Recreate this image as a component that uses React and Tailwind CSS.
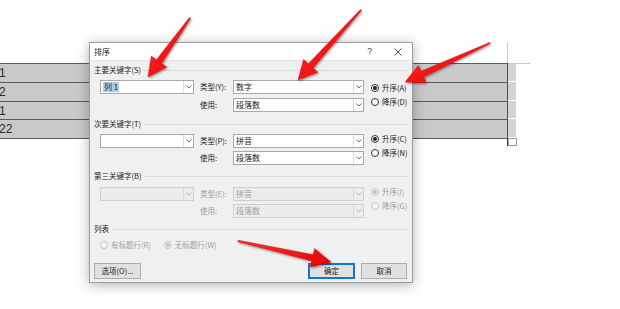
import React from "react";

const FONT = { fontFamily: '"Noto Sans CJK SC", "Microsoft YaHei", sans-serif' };

function arrowPoints(t, p, h = 19, w = 9.5, ws = 3.2, wt = 0.7) {
  const dx = p[0] - t[0];
  const dy = p[1] - t[1];
  const len = Math.hypot(dx, dy);
  const ux = dx / len;
  const uy = dy / len;
  const nx = -uy;
  const ny = ux;
  const bx = p[0] - ux * h;
  const by = p[1] - uy * h;
  const pts = [
    [t[0] + nx * wt, t[1] + ny * wt],
    [bx + nx * ws, by + ny * ws],
    [bx + nx * w, by + ny * w],
    [p[0], p[1]],
    [bx - nx * w, by - ny * w],
    [bx - nx * ws, by - ny * ws],
    [t[0] - nx * wt, t[1] - ny * wt],
  ];
  return pts.map((q) => q[0].toFixed(1) + "," + q[1].toFixed(1)).join(" ");
}

function Chevron({ disabled }) {
  return (
    <svg width="6" height="4" viewBox="0 0 6 4">
      <path d="M0.5 0.5 L3 3 L5.5 0.5" fill="none" stroke={disabled ? "#b0b0b0" : "#606060"} strokeWidth="0.9" />
    </svg>
  );
}

function Box({ value, width, disabled, selected }) {
  return (
    <div
      className={
        "flex h-[14px] flex-none items-stretch border " +
        (disabled ? "border-[#cfcfcf] bg-[#ececec]" : "border-[#a8a8a8] bg-white")
      }
      style={{ width }}
    >
      <div className="flex flex-1 items-center pl-[2px] text-[8px]">
        {value ? (
          <span
            className={
              "whitespace-nowrap leading-[10px] " +
              (selected ? "bg-[#a9cdf1] text-[#1a1a1a] px-[1px]" : disabled ? "text-[#a0a0a0]" : "text-[#1a1a1a]")
            }
          >
            {value}
          </span>
        ) : null}
      </div>
      <div className={"flex w-[10px] items-center justify-center border-l " + (disabled ? "border-[#dadada]" : "border-[#dcdcdc]")}>
        <Chevron disabled={disabled} />
      </div>
    </div>
  );
}

function Radio({ label, checked, disabled }) {
  return (
    <div className="flex h-[10px] flex-none items-center whitespace-nowrap">
      <div
        className={
          "flex h-[8px] w-[8px] flex-none items-center justify-center rounded-full border " +
          (disabled ? "border-[#c4c4c4] bg-[#f4f4f4]" : "border-[#333333] bg-white")
        }
      >
        {checked ? (
          <div className={"h-[4px] w-[4px] rounded-full " + (disabled ? "bg-[#c0c0c0]" : "bg-[#222222]")} />
        ) : null}
      </div>
      <span className={"ml-[3px] whitespace-nowrap " + (disabled ? "text-[#a0a0a0]" : "text-[#1a1a1a]")}>{label}</span>
    </div>
  );
}

function Header({ children, mt }) {
  return (
    <div className="flex h-[10px] items-center" style={{ marginTop: mt }}>
      <span className="whitespace-nowrap text-[#1a1a1a]">{children}</span>
      <div className="ml-[3px] h-px flex-1 bg-[#dadada]" />
    </div>
  );
}

function Group({ title, mt, rowMt, rowGap, key1, typeLabel, typeVal, asc, desc, disabled, selected, radioPt }) {
  const lbl = disabled ? "text-[#a0a0a0]" : "text-[#1a1a1a]";
  return (
    <>
      <Header mt={mt}>{title}</Header>
      <div className="flex" style={{ marginTop: rowMt }}>
        <div className="ml-[6px] flex-none">
          <Box value={key1} width={94} disabled={disabled} selected={selected} />
        </div>
        <div className="ml-[6px] flex flex-none flex-col" style={{ gap: rowGap }}>
          <div className="flex items-center">
            <span className={"w-[33px] whitespace-nowrap " + lbl}>{typeLabel}</span>
            <Box value={typeVal} width={131} disabled={disabled} />
          </div>
          <div className="flex items-center">
            <span className={"w-[33px] whitespace-nowrap " + lbl}>使用:</span>
            <Box value="段落数" width={131} disabled={disabled} />
          </div>
        </div>
        <div className="ml-[7px] flex flex-none flex-col gap-[4px] text-[7.5px]" style={{ paddingTop: radioPt }}>
          <Radio label={asc} checked disabled={disabled} />
          <Radio label={desc} disabled={disabled} />
        </div>
      </div>
    </>
  );
}

function Button({ children, primary, width }) {
  return (
    <div
      className={
        "flex h-[16px] items-center justify-center whitespace-nowrap bg-[#e1e1e1] text-[#1a1a1a] " +
        (primary ? "border-2 border-[#0a78d4]" : "border border-[#adadad]")
      }
      style={{ width }}
    >
      {children}
    </div>
  );
}

export default function App() {
  const rows = ["1", "2", "1", "22"];
  const rowH = [19, 19, 18, 19];
  const arrows = [
    [[190, 18], [148, 77]],
    [[361, 10], [298, 80]],
    [[490, 43], [405, 82]],
    [[238, 241], [331, 262]],
  ];
  return (
    <div className="relative h-[309px] w-[620px] overflow-hidden bg-white">
      {/* document table */}
      <div className="flex">
        <div className="w-[507px]" />
        <div className="mt-[43px] h-[20px] w-px bg-[#c8c8c8]" />
      </div>
      <div className="flex">
        <div className="flex w-[507px] flex-col border-t border-[#5a5a5a]">
          {rows.map((r, i) => (
            <div
              key={i}
              className="flex items-center border-b border-[#5a5a5a] bg-[#c9c9c9] text-[12px] text-[#2a2a2a]"
              style={{ height: rowH[i], fontFamily: '"Liberation Sans", Arial, sans-serif' }}
            >
              <span className="-ml-[1px]">{r}</span>
            </div>
          ))}
        </div>
        <div className="w-px bg-[#4a4a4a]" />
        <div className="flex flex-col">
          <div className="h-px w-[22px] bg-[#c8c8c8]" />
          {rowH.map((h, i) => (
            <div key={i} className="w-[8px] border-b border-white bg-[#d3d3d3]" style={{ height: h - (i === 0 ? 1 : 0) }} />
          ))}
          <div className="h-[8px] w-[9px] border border-[#9a9a9a] bg-white" />
        </div>
      </div>

      {/* dialog window */}
      <div
        className="absolute left-[89px] top-[42px] flex h-[241px] w-[324px] flex-col border border-[#9c9c9c] bg-[#f0f0f0] text-[7.5px] shadow-[0_2px_12px_rgba(0,0,0,0.3)]"
        style={FONT}
      >
        <div className="flex h-[18px] items-center border-b border-[#e2e2e2] bg-white pl-[4px] text-[#1a1a1a]">
          <span className="text-[8px]">排序</span>
          <div className="flex-1" />
          <span className="mr-[22px] text-[8.5px] text-[#333]" style={{ fontFamily: '"Liberation Sans", sans-serif' }}>?</span>
          <svg width="8" height="8" viewBox="0 0 8 8" className="mr-[10px]">
            <path d="M0.5 0.5 L7.5 7.5 M7.5 0.5 L0.5 7.5" stroke="#333" strokeWidth="0.9" />
          </svg>
        </div>
        <div className="flex flex-1 flex-col px-[4px]">
          <Group
            title="主要关键字(S)"
            mt={4}
            rowMt={5}
            rowGap={4}
            key1="列 1"
            selected
            typeLabel="类型(Y):"
            typeVal="数字"
            asc="升序(A)"
            desc="降序(D)"
            radioPt={3}
          />
          <Group
            title="次要关键字(T)"
            mt={7}
            rowMt={5}
            rowGap={3}
            key1=""
            typeLabel="类型(P):"
            typeVal="拼音"
            asc="升序(C)"
            desc="降序(N)"
            radioPt={0}
          />
          <Group
            title="第三关键字(B)"
            mt={6}
            rowMt={6}
            rowGap={3}
            key1=""
            disabled
            typeLabel="类型(E):"
            typeVal="拼音"
            asc="升序(I)"
            desc="降序(G)"
            radioPt={0}
          />
          <Header mt={6}>列表</Header>
          <div className="ml-[6px] mt-[6px] flex">
            <Radio label="有标题行(R)" disabled />
            <div className="ml-[13px]">
              <Radio label="无标题行(W)" checked disabled />
            </div>
          </div>
          <div className="mt-[13px] flex">
            <Button width={47}>选项(O)...</Button>
            <div className="flex-1" />
            <Button width={47} primary>确定</Button>
            <div className="w-[6px]" />
            <Button width={46}>取消</Button>
            <div className="w-[1px]" />
          </div>
        </div>
      </div>

      {/* red arrows */}
      <svg className="pointer-events-none absolute left-0 top-0" width="620" height="309" viewBox="0 0 620 309">
        <defs>
          <filter id="sh" x="-20%" y="-20%" width="140%" height="140%">
            <feDropShadow dx="1" dy="1.2" stdDeviation="0.9" floodColor="#000" floodOpacity="0.45" />
          </filter>
          <linearGradient id="rg" x1="0" y1="0" x2="1" y2="1">
            <stop offset="0" stopColor="#ff3030" />
            <stop offset="1" stopColor="#e60000" />
          </linearGradient>
        </defs>
        {arrows.map((a, i) => (
          <polygon key={i} points={arrowPoints(a[0], a[1])} fill="url(#rg)" stroke="#d40000" strokeWidth="0.4" filter="url(#sh)" />
        ))}
      </svg>
    </div>
  );
}
